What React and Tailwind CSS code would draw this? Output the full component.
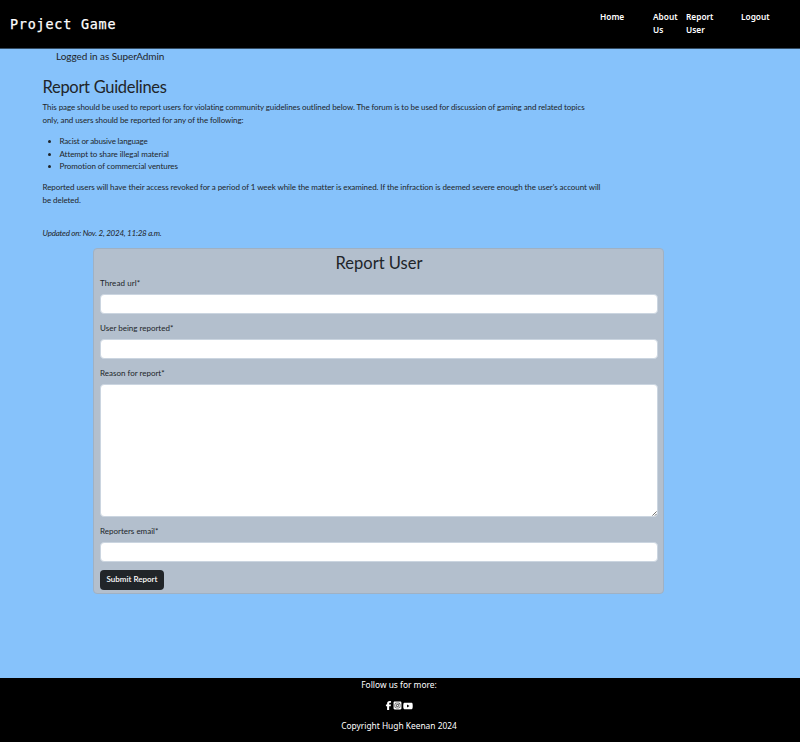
import { FaFacebookF, FaSquareInstagram, FaYoutube } from "react-icons/fa6";

const field =
  "block w-full rounded-[4px] border border-[#cbd5e0] bg-white px-2 outline-none";

function Field({ label, id, spacing, multiline }) {
  return (
    <div className="mb-[8px]">
      <label htmlFor={id} className="mb-[4px] flex h-[13px] items-center whitespace-nowrap">
        <span className={spacing}>{label}*</span>
      </label>
      {multiline ? (
        <div className="relative">
          <textarea id={id} className={`${field} h-[133px] resize-none`} />
          <svg viewBox="0 0 6 6" className="absolute right-[1px] bottom-[1px] size-[5px]" stroke="#555" fill="none">
            <path d="M0.5 5.5 5.5 0.5M3.5 5.5 5.5 3.5" />
          </svg>
        </div>
      ) : (
        <input id={id} className={`${field} h-[20px]`} />
      )}
    </div>
  );
}

export default function App() {
  return (
    <div className="flex h-[742px] w-[800px] flex-col overflow-hidden bg-[#86c2fb] font-[Lato,sans-serif] text-[8px] leading-[12.6px] text-[#212529]">
      <header className="flex h-[49px] shrink-0 border-b border-[#344c62] bg-black text-white">
        <a className="ml-[10px] mt-[14px] w-[590px] font-['DejaVu_Sans_Mono',monospace] text-[13.4px] leading-[22px] tracking-[0.8px] [-webkit-text-stroke:0.25px_white]">
          Project Game
        </a>
        <nav className="mt-[11.4px] flex font-['Noto_Sans',sans-serif] text-[8.3px] font-semibold leading-[12.5px]">
          <a className="w-[53px]">Home</a>
          <a className="w-[33px]">About<br />Us</a>
          <a className="w-[55px]">Report<br />User</a>
          <a>Logout</a>
        </nav>
      </header>

      <main className="h-[629px] shrink-0">
        <p className="ml-[56px] h-[29px] text-[10px] leading-[14px] tracking-[-0.07px]">
          Logged in as SuperAdmin
        </p>
        <section className="ml-[42.5px] whitespace-nowrap">
          <h1 className="mb-[4px] h-[19px] text-[16.5px] leading-[19px] tracking-[-0.3px]">Report Guidelines</h1>
          <p className="tracking-[-0.085px]">
            This page should be used to report users for violating community guidelines outlined below. The forum is to be used for discussion of gaming and related topics
            <br />
            only, and users should be reported for any of the following:
          </p>
          <ul className="mt-[9px] list-disc pl-[17px]">
            <li className="tracking-[-0.16px]">Racist or abusive language</li>
            <li className="tracking-[-0.07px]">Attempt to share illegal material</li>
            <li className="tracking-[-0.06px]">Promotion of commercial ventures</li>
          </ul>
          <p className="mt-[8px] tracking-[-0.065px]">
            Reported users will have their access revoked for a period of 1 week while the matter is examined. If the infraction is deemed severe enough the user's account will
            <br />
            be deleted.
          </p>
          <p className="mt-[21px] tracking-[-0.22px] italic">Updated on: Nov. 2, 2024, 11:28 a.m.</p>
        </section>

        <form className="ml-[93px] mt-[8px] h-[346px] w-[571px] rounded-[4px] border border-[#9fb1c4] bg-[#b3bfcd] pt-[4px] pr-[5px] pl-[6px]">
          <h2 className="mb-[4px] h-[20px] text-center text-[16.5px] leading-[20px]">Report User</h2>
          <Field label="Thread url" id="url" spacing="tracking-[0.08px]" />
          <Field label="User being reported" id="user" />
          <Field label="Reason for report" id="reason" multiline />
          <Field label="Reporters email" id="email" />
          <button type="button" className="block h-[20px] w-[64px] rounded-[4px] bg-[#212529] text-center font-semibold whitespace-nowrap text-white">
            Submit Report
          </button>
        </form>
      </main>

      <footer className="flex h-[64px] shrink-0 flex-col items-center bg-black pr-[2px] font-['Noto_Sans',sans-serif] text-[8.4px] text-white">
        <p className="mt-[0.5px]">Follow us for more:</p>
        <div className="my-[8px] flex h-[13px] items-center gap-[1px]">
          <FaFacebookF size={9} className="w-[7px]" />
          <FaSquareInstagram size={9} />
          <FaYoutube size={10} />
        </div>
        <p>Copyright Hugh Keenan 2024</p>
      </footer>
    </div>
  );
}
